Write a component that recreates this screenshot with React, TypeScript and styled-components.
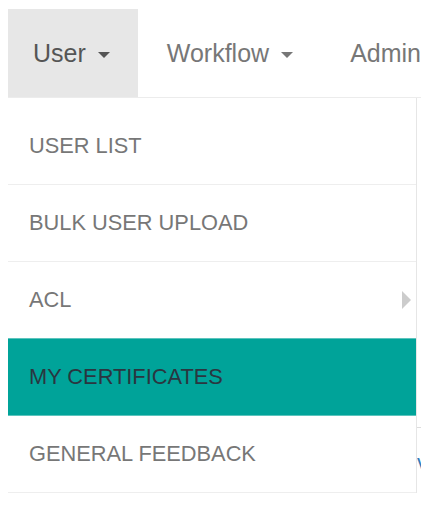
import React from "react";
import styled, { createGlobalStyle } from "styled-components";

const Global = createGlobalStyle`
  html, body { margin: 0; padding: 0; background: #fff; }
  body { padding: 8px; font-family: "Liberation Sans", Arial, sans-serif; }
`;

const Frame = styled.div`
  position: relative;
  width: 413px;
  overflow: hidden;
`;

const Navbar = styled.nav`
  display: flex;
  padding-top: 1px;
  border-bottom: 1px solid #ececec;
  white-space: nowrap;
`;

const NavItem = styled.div<{ $active?: boolean }>`
  display: flex;
  align-items: center;
  height: 88px;
  padding: 0 28px 0 ${(p) => (p.$active ? "25px" : "29px")};
  flex-shrink: 0;
  font-size: 25px;
  color: ${(p) => (p.$active ? "#555" : "#777")};
  background: ${(p) => (p.$active ? "#e7e7e7" : "transparent")};
`;

const Caret = styled.span`
  display: inline-block;
  margin-left: 12px;
  margin-top: 3px;
  width: 0;
  height: 0;
  border-top: 6px solid currentColor;
  border-left: 6px solid transparent;
  border-right: 6px solid transparent;
`;

const Content = styled.div`
  padding-top: 329px;
`;

const ContentRow = styled.div`
  border-top: 1px solid #dddddd;
  padding: 22px 0 40px 409px;
  font-size: 21px;
  color: #337ab7;
  white-space: nowrap;
`;

const Menu = styled.ul`
  position: absolute;
  top: 90px;
  left: 0;
  width: 408px;
  margin: 0;
  padding: 10px 0 0;
  list-style: none;
  background: #fff;
  border-right: 1px solid #e6e6e6;
`;

const MenuItem = styled.li<{ $active?: boolean }>`
  position: relative;
  display: flex;
  align-items: center;
  height: 76px;
  padding-left: 21px;
  font-size: 21.8px;
  color: ${(p) => (p.$active ? "#2a3640" : "#777")};
  background: ${(p) => (p.$active ? "#00a399" : "#fff")};
  border-bottom: 1px solid ${(p) => (p.$active ? "#5cc4bd" : "#eeeeee")};
  box-shadow: ${(p) => (p.$active ? "0 -1px 0 #5cc4bd" : "none")};
`;

const SubArrow = styled.span`
  position: absolute;
  right: 5px;
  top: 50%;
  margin-top: -9px;
  width: 0;
  height: 0;
  border-left: 9px solid #cccccc;
  border-top: 9px solid transparent;
  border-bottom: 9px solid transparent;
`;

const items = [
  { label: "USER LIST" },
  { label: "BULK USER UPLOAD" },
  { label: "ACL", sub: true },
  { label: "MY CERTIFICATES", active: true },
  { label: "GENERAL FEEDBACK" },
];

export default function App() {
  return (
    <>
      <Global />
      <Frame>
        <Navbar>
          <NavItem $active>
            User
            <Caret />
          </NavItem>
          <NavItem>
            Workflow
            <Caret />
          </NavItem>
          <NavItem>Administration</NavItem>
        </Navbar>
        <Content>
          <ContentRow>view</ContentRow>
        </Content>
        <Menu>
          {items.map((it) => (
            <MenuItem key={it.label} $active={it.active}>
              {it.label}
              {it.sub && <SubArrow />}
            </MenuItem>
          ))}
        </Menu>
      </Frame>
    </>
  );
}
